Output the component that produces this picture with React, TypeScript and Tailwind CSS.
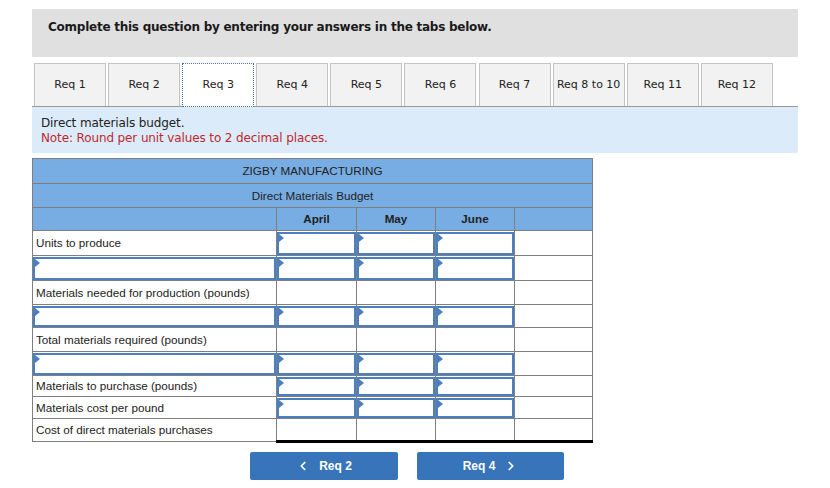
import { ChevronLeft, ChevronRight } from "lucide-react"

const tabs = ["Req 1", "Req 2", "Req 3", "Req 4", "Req 5", "Req 6", "Req 7", "Req 8 to 10", "Req 11", "Req 12"]

type Row = { label?: string; input?: boolean; h: number; valueInputs?: boolean; topDark?: boolean }

const rows: Row[] = [
  { label: "Units to produce", h: 25, valueInputs: true },
  { input: true, h: 25, valueInputs: true },
  { label: "Materials needed for production (pounds)", h: 24, topDark: true },
  { input: true, h: 23, valueInputs: true },
  { label: "Total materials required (pounds)", h: 24, topDark: true },
  { input: true, h: 24, valueInputs: true },
  { label: "Materials to purchase (pounds)", h: 21, valueInputs: true, topDark: true },
  { label: "Materials cost per pound", h: 22, valueInputs: true },
  { label: "Cost of direct materials purchases", h: 23, topDark: true },
]

const InputBox = ({ h }: { h: number }) => (
  <div className="relative border-2 border-[#4a7fc1] bg-white" style={{ height: h - 2 }}>
    <div className="absolute left-0 top-0 w-0 h-0 border-t-[4px] border-b-[4px] border-l-[5px] border-t-transparent border-b-transparent border-l-[#4a7fc1]" />
  </div>
)

const App = () => {
  return (
    <div className="w-[830px] h-[488px] bg-white pt-[9px] pl-[32px]" style={{ fontFamily: '"DejaVu Sans", Verdana, sans-serif' }}>
      <div className="w-[766px] h-[48px] bg-[#e0e0e0] pl-[16px] pt-[11px]">
        <p className="text-[12px] leading-[15px] font-bold text-[#1a1a1a] tracking-[-0.25px]">
          Complete this question by entering your answers in the tabs below.
        </p>
      </div>

      <div className="mt-[6px] w-[766px] flex gap-[2.1px] pl-[2px] border-b border-[#999]">
        {tabs.map((t) => (
          <div
            key={t}
            className={`w-[72px] h-[43px] flex items-center justify-center text-[11px] text-[#222] ${
              t == "Req 3"
                ? "bg-white border border-dotted border-[#4a6fa5] -mb-px h-[44px]"
                : "bg-[#f2f2f2] border border-b-0 border-[#c4c4c4]"
            }`}
          >
            {t}
          </div>
        ))}
      </div>

      <div className="w-[766px] h-[46px] bg-[#dcebf9] pl-[9px] pt-[9px] text-[12px] leading-[15px] tracking-[-0.12px]">
        <p className="text-[#222]">Direct materials budget.</p>
        <p className="text-[#c0282d]">Note: Round per unit values to 2 decimal places.</p>
      </div>

      <table
        className="mt-[5px] border-collapse table-fixed w-[560px] text-[11.7px] text-[#222]"
        style={{ fontFamily: '"Liberation Sans", Arial, sans-serif' }}
      >
        <colgroup>
          <col className="w-[244px]" />
          <col className="w-[80px]" />
          <col className="w-[79px]" />
          <col className="w-[79px]" />
          <col className="w-[78px]" />
        </colgroup>
        <thead>
          <tr className="h-[25px] bg-[#77ade3]">
            <th colSpan={5} className="border border-[#7f7f7f] font-normal text-center">ZIGBY MANUFACTURING</th>
          </tr>
          <tr className="h-[24px] bg-[#77ade3]">
            <th colSpan={5} className="border border-[#7f7f7f] font-normal text-center">Direct Materials Budget</th>
          </tr>
          <tr className="h-[23px] bg-[#77ade3]">
            <th className="border border-[#7f7f7f]" />
            <th className="border border-[#7f7f7f] font-bold">April</th>
            <th className="border border-[#7f7f7f] font-bold">May</th>
            <th className="border border-[#7f7f7f] font-bold">June</th>
            <th className="border border-[#7f7f7f]" />
          </tr>
        </thead>
        <tbody>
          {rows.map((r, i) => (
            <tr key={i} style={{ height: r.h }}>
              <td className={`border border-[#7f7f7f] p-0 ${r.input ? "" : "pl-[3px]"}`}>
                {r.input ? <InputBox h={r.h} /> : r.label}
              </td>
              {[0, 1, 2].map((c) => (
                <td
                  key={c}
                  className={`border border-[#7f7f7f] p-0 ${r.topDark ? "border-t-black" : ""} ${
                    i == rows.length - 1 ? "border-b-[3px] border-b-black" : ""
                  }`}
                >
                  {r.valueInputs ? <InputBox h={r.h} /> : null}
                </td>
              ))}
              <td
                className={`border border-[#7f7f7f] p-0 ${r.topDark ? "border-t-black" : ""} ${
                  i == rows.length - 1 ? "border-b-[3px] border-b-black" : ""
                }`}
              />
            </tr>
          ))}
        </tbody>
      </table>

      <div className="mt-[9px] ml-[218px] flex gap-[19px]" style={{ fontFamily: '"Liberation Sans", Arial, sans-serif' }}>
        <button className="w-[148px] h-[28px] bg-[#3874b9] rounded-[2px] text-white text-[12px] font-bold flex items-center justify-center gap-[9px]">
          <ChevronLeft className="w-[14px] h-[14px]" strokeWidth={3} />
          Req 2
        </button>
        <button className="w-[147px] h-[28px] bg-[#3874b9] rounded-[2px] text-white text-[12px] font-bold flex items-center justify-center gap-[9px]">
          Req 4
          <ChevronRight className="w-[14px] h-[14px]" strokeWidth={3} />
        </button>
      </div>
    </div>
  )
}

export default App
